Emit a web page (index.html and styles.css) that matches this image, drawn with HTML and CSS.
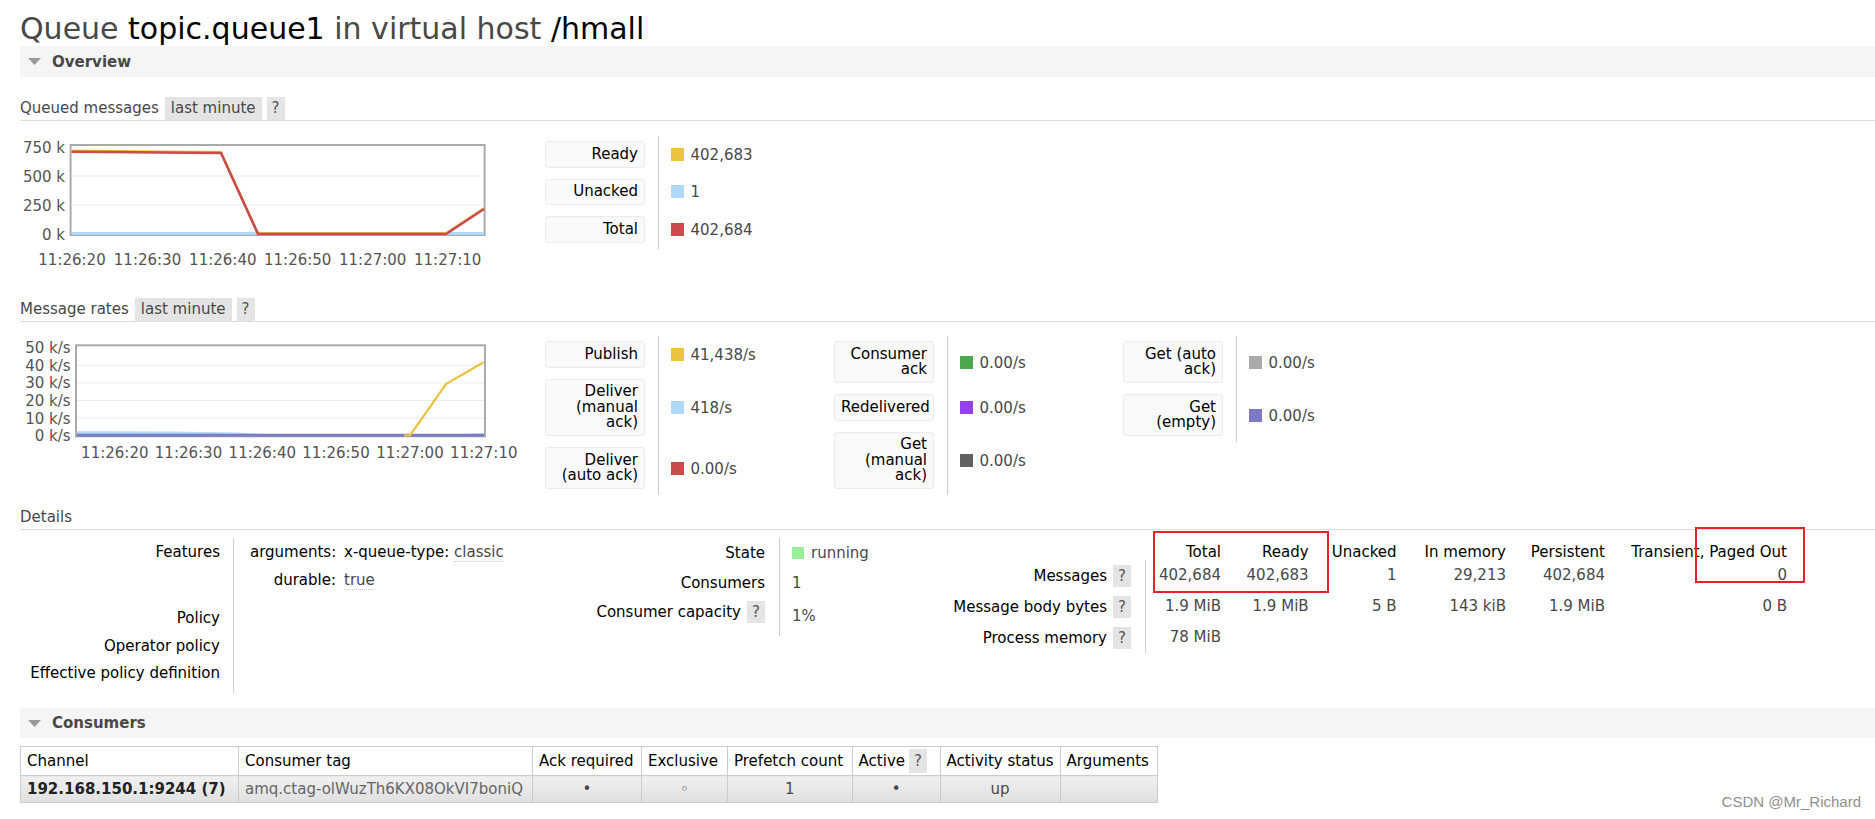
FILE: index.html
```html
<!DOCTYPE html>
<html>
<head>
<meta charset="utf-8">
<title>Queue topic.queue1</title>
<link rel="stylesheet" href="styles.css">
</head>
<body>
<div class="page">
  <h1>Queue <b>topic.queue1</b> in virtual host <b>/hmall</b></h1>

  <div class="bar"><svg class="tri" viewBox="0 0 13 7"><polygon points="0,0 13,0 6.5,7" fill="#9a9a9a"/></svg><span>Overview</span></div>

  <div class="subhead"><span class="sublabel">Queued messages</span><span class="tag">last minute</span><span class="help">?</span></div>
  <div class="chart-row queued">
    <svg class="chart" width="525" height="140" viewBox="0 0 525 140">
      <rect x="50.6" y="9" width="414" height="90" fill="#fff" stroke="#aaa" stroke-width="2"/>
      <line class="grid" x1="51.6" y1="40" x2="463.6" y2="40"/>
      <line class="grid" x1="51.6" y1="69" x2="463.6" y2="69"/>
      <g text-anchor="end">
        <text x="45" y="16.5">750 k</text>
        <text x="45" y="45.5">500 k</text>
        <text x="45" y="74.5">250 k</text>
        <text x="45" y="103.5">0 k</text>
      </g>
      <g text-anchor="middle">
        <text x="52" y="128.5">11:26:20</text>
        <text x="127.5" y="128.5">11:26:30</text>
        <text x="202.8" y="128.5">11:26:40</text>
        <text x="277.7" y="128.5">11:26:50</text>
        <text x="352.7" y="128.5">11:27:00</text>
        <text x="427.7" y="128.5">11:27:10</text>
      </g>
      <line x1="51.6" y1="97.5" x2="463.6" y2="97.5" stroke="#afd8f8" stroke-width="3"/>
      <polyline points="51.6,14.6 201,16 238,97 426,97 464,72" fill="none" stroke="#edc240" stroke-width="2"/>
      <polyline points="51.6,15.7 201,17 238,98 426,98 464,73" fill="none" stroke="#cb4b4b" stroke-width="2.6"/>
    </svg>
    <table class="legend">
      <tr><th><div class="lbl">Ready</div></th><td><span class="sw c-ready"></span>402,683</td></tr>
      <tr><th><div class="lbl">Unacked</div></th><td><span class="sw c-unacked"></span>1</td></tr>
      <tr><th><div class="lbl">Total</div></th><td><span class="sw c-total"></span>402,684</td></tr>
    </table>
  </div>

  <div class="subhead"><span class="sublabel">Message rates</span><span class="tag">last minute</span><span class="help">?</span></div>
  <div class="chart-row rates">
    <svg class="chart" width="525" height="132" viewBox="0 0 525 132">
      <rect x="56" y="9.3" width="409" height="91" fill="#fff" stroke="#aaa" stroke-width="2"/>
      <line class="grid" x1="57" y1="29.3" x2="464" y2="29.3"/>
      <line class="grid" x1="57" y1="46.9" x2="464" y2="46.9"/>
      <line class="grid" x1="57" y1="64.5" x2="464" y2="64.5"/>
      <line class="grid" x1="57" y1="82.1" x2="464" y2="82.1"/>
      <g text-anchor="end">
        <text x="50.7" y="17.2">50 k/s</text>
        <text x="50.7" y="34.8">40 k/s</text>
        <text x="50.7" y="52.4">30 k/s</text>
        <text x="50.7" y="70">20 k/s</text>
        <text x="50.7" y="87.6">10 k/s</text>
        <text x="50.7" y="105.2">0 k/s</text>
      </g>
      <g text-anchor="middle">
        <text x="94.8" y="121.8">11:26:20</text>
        <text x="168.5" y="121.8">11:26:30</text>
        <text x="242.3" y="121.8">11:26:40</text>
        <text x="316" y="121.8">11:26:50</text>
        <text x="390" y="121.8">11:27:00</text>
        <text x="463.8" y="121.8">11:27:10</text>
      </g>
      <polygon points="57,95.2 150,95.5 215,96.4 250,98.3 440,98.3 464,97.2 464,100.3 57,100.3" fill="#afd8f8"/>
      <line x1="57" y1="99.2" x2="464" y2="99.2" stroke="#7e7bc5" stroke-width="3"/>
      <polyline points="384,99.3 390,99.3 426,48 463.5,26.3" fill="none" stroke="#edc240" stroke-width="2.2"/>
    </svg>
    <div class="legends">
      <table class="legend">
        <tr><th><div class="lbl">Publish</div></th><td><span class="sw c-ready"></span>41,438/s</td></tr>
        <tr><th><div class="lbl">Deliver<br>(manual<br>ack)</div></th><td><span class="sw c-unacked"></span>418/s</td></tr>
        <tr><th><div class="lbl">Deliver<br>(auto ack)</div></th><td><span class="sw c-total"></span>0.00/s</td></tr>
      </table>
      <table class="legend">
        <tr><th><div class="lbl">Consumer<br>ack</div></th><td><span class="sw c-ack"></span>0.00/s</td></tr>
        <tr><th><div class="lbl">Redelivered</div></th><td><span class="sw c-redeliver"></span>0.00/s</td></tr>
        <tr><th><div class="lbl">Get<br>(manual<br>ack)</div></th><td><span class="sw c-getman"></span>0.00/s</td></tr>
      </table>
      <table class="legend">
        <tr><th><div class="lbl">Get (auto<br>ack)</div></th><td><span class="sw c-getauto"></span>0.00/s</td></tr>
        <tr><th><div class="lbl">Get<br>(empty)</div></th><td><span class="sw c-getempty"></span>0.00/s</td></tr>
      </table>
    </div>
  </div>

  <div class="subhead"><span class="sublabel">Details</span></div>
  <div class="details">
    <div class="facts-a">
      <div class="fk">Features</div>
      <div class="fv">
        <div class="kv">
          <span class="kk">arguments:</span><span class="kval">x-queue-type: <span class="vv">classic</span></span>
          <span class="kk">durable:</span><span class="kval"><span class="vv">true</span></span>
        </div>
      </div>
      <div class="fk">Policy</div><div class="fv"></div>
      <div class="fk">Operator policy</div><div class="fv"></div>
      <div class="fk">Effective policy definition</div><div class="fv"></div>
    </div>

    <div class="facts-b">
      <div class="fk">State</div><div class="fv"><span class="sw-run"></span>running</div>
      <div class="fk">Consumers</div><div class="fv">1</div>
      <div class="fk cap"><span class="t">Consumer capacity</span><span class="help">?</span></div><div class="fv capv">1%</div>
    </div>

    <div class="facts-c">
      <div></div>
      <div class="fc-h">Total</div>
      <div class="fc-h">Ready</div>
      <div class="fc-h">Unacked</div>
      <div class="fc-h">In memory</div>
      <div class="fc-h">Persistent</div>
      <div class="fc-h">Transient, Paged Out</div>

      <div class="fc-k">Messages<span class="help">?</span></div>
      <div class="fc-v">402,684</div>
      <div class="fc-v">402,683</div>
      <div class="fc-v">1</div>
      <div class="fc-v">29,213</div>
      <div class="fc-v">402,684</div>
      <div class="fc-v">0</div>

      <div class="fc-k">Message body bytes<span class="help">?</span></div>
      <div class="fc-v">1.9 MiB</div>
      <div class="fc-v">1.9 MiB</div>
      <div class="fc-v">5 B</div>
      <div class="fc-v">143 kiB</div>
      <div class="fc-v">1.9 MiB</div>
      <div class="fc-v">0 B</div>

      <div class="fc-k">Process memory<span class="help">?</span></div>
      <div class="fc-v">78 MiB</div>
    </div>
  </div>

  <div class="bar cbar"><svg class="tri" viewBox="0 0 13 7"><polygon points="0,0 13,0 6.5,7" fill="#9a9a9a"/></svg><span>Consumers</span></div>
  <table class="list">
    <colgroup>
      <col class="w-ch"><col class="w-tag"><col class="w-ack"><col class="w-ex"><col class="w-pf"><col class="w-act"><col class="w-st"><col class="w-arg">
    </colgroup>
    <tr>
      <th>Channel</th>
      <th>Consumer tag</th>
      <th>Ack required</th>
      <th>Exclusive</th>
      <th>Prefetch count</th>
      <th><span class="act">Active<span class="help hh">?</span></span></th>
      <th>Activity status</th>
      <th>Arguments</th>
    </tr>
    <tr>
      <td class="chan">192.168.150.1:9244 (7)</td>
      <td class="ctag">amq.ctag-olWuzTh6KX08OkVI7boniQ</td>
      <td class="c">&#8226;</td>
      <td class="c">&#9702;</td>
      <td class="c">1</td>
      <td class="c">&#8226;</td>
      <td class="c">up</td>
      <td></td>
    </tr>
  </table>
</div>

<div class="annot annot-1"></div>
<div class="annot annot-2"></div>
<div class="watermark">CSDN @Mr_Richard</div>
</body>
</html>
```

FILE: styles.css
```css
* { box-sizing: border-box; }

html, body {
  margin: 0;
  padding: 0;
  background: #fff;
}

body {
  position: relative;
  width: 1875px;
  height: 819px;
  overflow: hidden;
  font-family: "DejaVu Sans", Verdana, sans-serif;
  font-size: 15px;
  color: #484848;
}

.page {
  padding-left: 20px;
}

h1 {
  margin: 12px 0 0;
  height: 34px;
  font-size: 30px;
  line-height: 34px;
  font-weight: normal;
  color: #484848;
  white-space: nowrap;
}

h1 b {
  font-weight: normal;
  color: #000;
}

.bar {
  display: flex;
  align-items: center;
  height: 31px;
  padding-left: 8px;
  background: #f5f5f5;
}

.bar .tri {
  flex: none;
  width: 13px;
  height: 7px;
  margin-right: 11px;
}

.bar span {
  font-weight: bold;
  color: #484848;
}

.subhead {
  display: flex;
  height: 24px;
  margin-top: 20px;
  border-bottom: 1px solid #ddd;
  line-height: 23px;
  white-space: nowrap;
}

.chart-row + .subhead {
  margin-top: 0;
}

.sublabel {
  margin-right: 6px;
}

.tag {
  padding: 0 6px;
  background: #e4e4e4;
}

.help {
  display: inline-block;
  width: 18px;
  height: 22px;
  line-height: 22px;
  text-align: center;
  background: #e4e4e4;
  color: #555;
}

.subhead .help {
  height: 23px;
  line-height: 23px;
  margin-left: 5px;
}

.chart-row {
  display: flex;
  align-items: flex-start;
}

.chart-row.queued {
  height: 177px;
  padding-top: 15px;
}

.chart-row.rates {
  height: 184px;
  padding-top: 14px;
}

.chart {
  display: block;
  flex: none;
}

.chart text {
  font-family: "DejaVu Sans", Verdana, sans-serif;
  font-size: 15px;
  fill: #545454;
}

.chart .grid {
  stroke: #ebebeb;
  stroke-width: 1;
}

.legends {
  display: flex;
  align-items: flex-start;
}

.legend {
  width: 289px;
  table-layout: fixed;
  border-collapse: collapse;
  border-spacing: 0;
}

.legend th {
  width: 113px;
  padding: 5px 13px 6px 0;
  vertical-align: top;
  font-weight: normal;
}

.legend td {
  width: 176px;
  padding: 0 0 0 12px;
  border-left: 1px solid #ccc;
  vertical-align: middle;
  white-space: nowrap;
}

.lbl {
  width: 100px;
  padding: 4.5px 6px;
  border: 1px solid #ebebeb;
  border-radius: 3px;
  background: #f9f9f9;
  color: #000;
  line-height: 15.5px;
  text-align: right;
  white-space: nowrap;
}

.sw {
  display: inline-block;
  width: 13px;
  height: 13px;
  margin-right: 7px;
  vertical-align: -1px;
}

.c-ready { background: #edc240; }
.c-unacked { background: #afd8f8; }
.c-total { background: #cb4b4b; }
.c-ack { background: #4da74d; }
.c-redeliver { background: #9440ed; }
.c-getman { background: #616161; }
.c-getauto { background: #aaaaaa; }
.c-getempty { background: #7d7ac4; }

/* Details */
.details {
  display: flex;
  height: 178px;
  padding-top: 8px;
  line-height: 18px;
}

.facts-a {
  display: grid;
  width: 560px;
  grid-template-columns: 214px 1fr;
  grid-template-rows: 66px 28px 27px 34px;
  align-content: start;
}

.fk {
  padding: 5px 13px 0 0;
  border-right: 1px solid #ccc;
  color: #000;
  text-align: right;
  white-space: nowrap;
}

.fv {
  padding: 5px 0 0 16px;
  white-space: nowrap;
}

.kv {
  display: grid;
  grid-template-columns: 86px auto;
  grid-auto-rows: 28px;
  column-gap: 8px;
  justify-content: start;
}

.kk {
  color: #000;
  text-align: right;
}

.kval {
  color: #000;
}

.vv {
  color: #484848;
  border-bottom: 1px dotted #ccc;
}

.facts-b {
  display: grid;
  width: 360px;
  grid-template-columns: 200px 1fr;
  grid-template-rows: 30px 30px 38px;
  align-content: start;
}

.facts-b .fk {
  padding: 6px 14px 0 0;
}

.facts-b .fv {
  padding: 6px 0 0 12px;
}

.facts-b .fk.cap {
  display: flex;
  justify-content: flex-end;
  align-items: flex-start;
  gap: 6px;
  padding-top: 3px;
}

.facts-b .fk.cap .t {
  padding-top: 2px;
}

.facts-b .fv.capv {
  padding-top: 9px;
}

.sw-run {
  display: inline-block;
  width: 12px;
  height: 12px;
  margin-right: 7px;
  vertical-align: -1px;
  background: #99ee99;
}

.facts-c {
  display: grid;
  margin-top: 6px;
  grid-template-columns: 206px 83px 87.6px 88px 109.4px 99px 182px;
  grid-template-rows: 16px 31px 31px 31px;
  align-content: start;
  line-height: 16px;
}

.fc-h {
  padding-right: 8px;
  color: #000;
  text-align: right;
  white-space: nowrap;
}

.fc-k {
  display: flex;
  justify-content: flex-end;
  align-items: center;
  gap: 6px;
  padding-right: 14px;
  border-right: 1px solid #ccc;
  color: #000;
  white-space: nowrap;
}

.fc-v {
  padding-right: 8px;
  line-height: 31px;
  text-align: right;
  white-space: nowrap;
}

/* Consumers */
.cbar {
  height: 30px;
}

.list {
  margin-top: 8px;
  width: 1137px;
  table-layout: fixed;
  border-collapse: collapse;
}

.w-ch { width: 218px; }
.w-tag { width: 294px; }
.w-ack { width: 109px; }
.w-ex { width: 86px; }
.w-pf { width: 124.6px; }
.w-act { width: 88px; }
.w-st { width: 120px; }
.w-arg { width: 97.3px; }

.list th,
.list td {
  padding: 0 6px;
  border: 1px solid #ccc;
  white-space: nowrap;
  overflow: hidden;
}

.list th {
  height: 29px;
  background: #fff;
  color: #000;
  font-weight: normal;
  text-align: left;
}

.list td {
  height: 27px;
  background: linear-gradient(#f0f0f0, #e0e0e0);
}

.list td.chan {
  font-weight: bold;
  color: #222;
}

.list td.ctag {
  color: #666;
}

.list td.c {
  text-align: center;
}

.act {
  display: inline-flex;
  align-items: center;
  gap: 4px;
}

.help.hh {
  height: 24px;
  line-height: 24px;
}

/* Overlays: screenshot annotations and watermark */
.annot {
  position: absolute;
  border: 2px solid #e8202a;
}

.annot-1 {
  left: 1153px;
  top: 531px;
  width: 176px;
  height: 62px;
}

.annot-2 {
  left: 1695px;
  top: 527px;
  width: 110px;
  height: 56px;
}

.watermark {
  position: absolute;
  right: 14px;
  top: 793px;
  font-family: "Liberation Sans", Arial, sans-serif;
  font-size: 15px;
  line-height: 18px;
  color: #8f8f8f;
}
```
